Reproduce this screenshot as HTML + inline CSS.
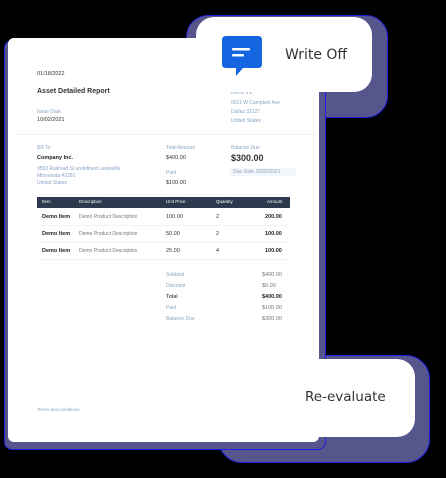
<html><head><style>
body{margin:0;width:446px;height:478px;background:#000;position:relative;overflow:hidden;font-family:"Liberation Sans",sans-serif}
.a{position:absolute;white-space:nowrap}
.s{font-size:5px;color:#8aa4c4}
.d{font-size:5.5px;color:#333}
.b{font-weight:bold;color:#222}
</style></head><body>
<div class="a" style="left:186px;top:15px;width:202px;height:103px;background:#56568c;border-radius:22px;border:1px solid #2020e0;box-sizing:border-box"></div>
<div class="a" style="left:218px;top:355px;width:212px;height:108px;background:#56568c;border-radius:24px;border:1px solid #2020e0;box-sizing:border-box"></div>
<div class="a" style="left:4px;top:40px;width:322px;height:410px;background:#56568c;border-radius:8px;border:1px solid #2020e0;box-sizing:border-box"></div>
<div class="a" style="left:8px;top:38px;width:311px;height:404px;background:#fff;border-radius:6px"></div>
<div class="a d" style="left:37px;top:71px">01/18/2022</div>
<div class="a b" style="left:37px;top:88px;font-size:7px;color:#333">Asset Detailed Report</div>
<div class="a s" style="left:37px;top:109px">Issue Date</div>
<div class="a d" style="left:37px;top:117px">10/02/2021</div>
<div class="a s" style="left:231px;top:90px">Demo Inc.</div>
<div class="a s" style="left:231px;top:100px">5011 W Campbell Ave</div>
<div class="a s" style="left:231px;top:109px">Dallas 32127</div>
<div class="a s" style="left:231px;top:118px">United States</div>
<div class="a" style="left:16px;top:134px;width:300px;height:1px;background:#f0f0f0"></div>
<div class="a s" style="left:37px;top:145px">Bill To</div>
<div class="a d b" style="left:37px;top:155px">Company Inc.</div>
<div class="a s" style="left:37px;top:166px">9553 Railroad St undefined Lewisville</div>
<div class="a s" style="left:37px;top:173px">Minnesota 42281</div>
<div class="a s" style="left:37px;top:180px">United States</div>
<div class="a s" style="left:166px;top:145px">Total Amount</div>
<div class="a d" style="left:166px;top:155px">$400.00</div>
<div class="a s" style="left:166px;top:170px">Paid</div>
<div class="a d" style="left:166px;top:180px">$100.00</div>
<div class="a s" style="left:231px;top:145px">Balance Due</div>
<div class="a b" style="left:231px;top:153px;font-size:9px;color:#333">$300.00</div>
<div class="a s" style="left:230px;top:168px;background:#f3f6fa;padding:1px 3px;width:60px">Due Date 10/02/2021</div>
<div class="a" style="left:37px;top:197px;width:253px;height:11px;background:#2b3a4c"></div>
<div class="a" style="left:42px;top:199px;font-size:4.5px;color:#fff">Item</div>
<div class="a" style="left:79px;top:199px;font-size:4.5px;color:#fff">Description</div>
<div class="a" style="left:166px;top:199px;font-size:4.5px;color:#fff">Unit Price</div>
<div class="a" style="left:216px;top:199px;font-size:4.5px;color:#fff">Quantity</div>
<div class="a" style="left:267px;top:199px;font-size:4.5px;color:#fff">Amount</div>
<div class="a d b" style="left:42px;top:214px">Demo Item</div><div class="a" style="left:79px;top:214px;font-size:5px;color:#777">Demo Product Description</div><div class="a d" style="left:166px;top:214px">100.00</div><div class="a d" style="left:216px;top:214px">2</div><div class="a d b" style="left:265px;top:214px">200.00</div>
<div class="a" style="left:37px;top:225px;width:253px;height:1px;background:#f3f3f3"></div>
<div class="a d b" style="left:42px;top:231px">Demo Item</div><div class="a" style="left:79px;top:231px;font-size:5px;color:#777">Demo Product Description</div><div class="a d" style="left:166px;top:231px">50.00</div><div class="a d" style="left:216px;top:231px">2</div><div class="a d b" style="left:265px;top:231px">100.00</div>
<div class="a" style="left:37px;top:242px;width:253px;height:1px;background:#f3f3f3"></div>
<div class="a d b" style="left:42px;top:248px">Demo Item</div><div class="a" style="left:79px;top:248px;font-size:5px;color:#777">Demo Product Description</div><div class="a d" style="left:166px;top:248px">25.00</div><div class="a d" style="left:216px;top:248px">4</div><div class="a d b" style="left:265px;top:248px">100.00</div>
<div class="a" style="left:37px;top:259px;width:253px;height:1px;background:#f3f3f3"></div>
<div class="a s" style="left:166px;top:272px">Subtotal</div><div class="a d" style="left:262px;top:272px;color:#777">$400.00</div>
<div class="a s" style="left:166px;top:283px">Discount</div><div class="a d" style="left:262px;top:283px;color:#777">$0.00</div>
<div class="a d" style="left:166px;top:294px;color:#222">Total</div><div class="a d b" style="left:262px;top:294px">$400.00</div>
<div class="a s" style="left:166px;top:305px">Paid</div><div class="a d" style="left:262px;top:305px;color:#777">$100.00</div>
<div class="a s" style="left:166px;top:316px">Balance Due</div><div class="a d" style="left:262px;top:316px;color:#777">$300.00</div>
<div class="a s" style="left:37px;top:407px;font-size:4.5px">Terms and conditions</div>

<div class="a" style="left:196px;top:17px;width:176px;height:75px;background:#fff;border-radius:18px"></div>
<svg class="a" style="left:222px;top:36px" width="41" height="40" viewBox="0 0 41 40"><path d="M4 0H36Q40 0 40 4V28Q40 32 36 32H21L14 40V32H4Q0 32 0 28V4Q0 0 4 0Z" fill="#1565e0"/><rect x="10" y="12" width="18" height="2.5" rx="1" fill="#fff"/><rect x="10" y="18" width="12" height="2.5" rx="1" fill="#fff"/></svg>
<div class="a" style="left:285px;top:47px;font-size:14px;color:#333;font-family:'DejaVu Sans',sans-serif">Write Off</div>

<div class="a" style="left:229px;top:359px;width:186px;height:78px;background:#fff;border-radius:18px"></div>
<div class="a" style="left:305px;top:389px;font-size:13.5px;color:#333;font-family:'DejaVu Sans',sans-serif">Re-evaluate</div>
</body></html>
